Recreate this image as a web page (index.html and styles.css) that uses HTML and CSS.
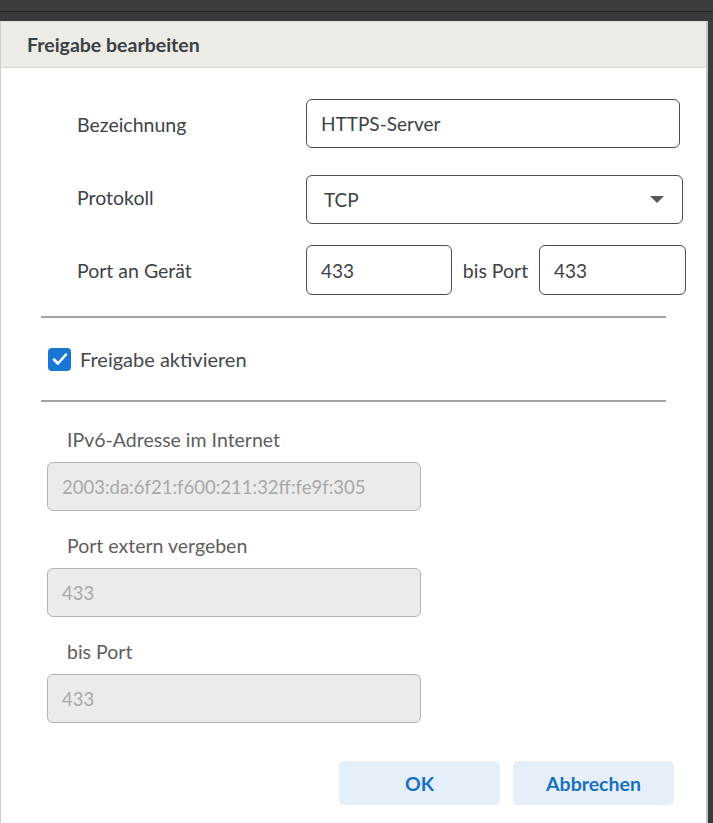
FILE: index.html
```html
<!DOCTYPE html>
<html lang="de">
<head>
<meta charset="utf-8">
<title>Freigabe bearbeiten</title>
<link rel="stylesheet" href="styles.css">
</head>
<body>
<div class="topbar"></div>
<div class="topbar2"></div>
<div class="dialog">
  <div class="dialog-header">Freigabe bearbeiten</div>
  <div class="dialog-body">
    <div class="form-top">
      <div class="row row-1">
        <span class="label">Bezeichnung</span>
        <div class="input w-name">HTTPS-Server</div>
      </div>
      <div class="row row-2">
        <span class="label">Protokoll</span>
        <div class="input select w-select"><span class="select-text">TCP</span><span class="caret"></span></div>
      </div>
      <div class="row row-3">
        <span class="label">Port an Gerät</span>
        <div class="input w-port">433</div>
        <span class="bis">bis Port</span>
        <div class="input w-port2">433</div>
      </div>
    </div>
    <div class="divider div-1"></div>
    <label class="check-row">
      <span class="checkbox">
        <svg width="16" height="14" viewBox="0 0 16 14"><path d="M2 7.5 L6 11.5 L14 2.5" fill="none" stroke="#fff" stroke-width="2.6" stroke-linecap="round" stroke-linejoin="round"/></svg>
      </span>
      <span class="check-label">Freigabe aktivieren</span>
    </label>
    <div class="divider div-2"></div>
    <div class="form-lower">
      <div class="field">
        <span class="sub-label">IPv6-Adresse im Internet</span>
        <div class="input disabled">2003:da:6f21:f600:211:32ff:fe9f:305</div>
      </div>
      <div class="field">
        <span class="sub-label">Port extern vergeben</span>
        <div class="input disabled">433</div>
      </div>
      <div class="field">
        <span class="sub-label">bis Port</span>
        <div class="input disabled">433</div>
      </div>
    </div>
    <div class="buttons">
      <button class="btn">OK</button>
      <button class="btn">Abbrechen</button>
    </div>
  </div>
</div>
</body>
</html>
```
FILE: styles.css
```css
html, body {
  margin: 0;
  padding: 0;
}
body {
  background: #3b3b3b;
  font-family: Lato, "Open Sans", sans-serif;
  width: 713px;
  height: 823px;
  overflow: hidden;
}
.topbar {
  height: 11px;
  background: #3d3d3d;
  border-bottom: 1px solid #242424;
}
.topbar2 {
  height: 9px;
  background: #3a3a3a;
}
.dialog {
  width: 708px;
  height: 802px;
  background: #fff;
  border-left: 1px solid #cfcfcf;
  border-right: 2px solid #c4c4c4;
  box-sizing: border-box;
}
.dialog-header {
  height: 47px;
  box-sizing: border-box;
  background: #ecebe5;
  border-top: 1px solid #e2e2e2;
  border-bottom: 1px solid #d6d6d6;
  padding-left: 26px;
  display: flex;
  align-items: center;
  font-size: 19.5px;
  font-weight: 700;
  color: #3b4045;
}
.dialog-body {
  padding-top: 31px;
}
.form-top {
  display: flex;
  flex-direction: column;
}
.row {
  display: flex;
  align-items: center;
}
.row-2 { margin-top: 27px; }
.row-3 { margin-top: 21px; }
.label {
  width: 229px;
  padding-left: 76px;
  font-size: 19.5px;
  color: #3d4247;
}
.row-1 .label { position: relative; top: 1px; }
.row-2 .label { position: relative; top: -2px; }
.input {
  box-sizing: border-box;
  height: 49px;
  border: 1px solid #4c4c4c;
  border-radius: 6px;
  display: flex;
  align-items: center;
  padding-left: 14px;
  font-size: 19px;
  color: #3d4247;
  background: #fff;
}
.w-name { width: 374px; }
.w-select { width: 377px; padding-left: 17px; padding-right: 18px; justify-content: space-between; }
.w-port { width: 146px; height: 50px; }
.w-port2 { width: 147px; height: 50px; }
.bis {
  width: 87px;
  text-align: center;
  font-size: 19.5px;
  color: #3d4247;
}
.caret {
  width: 0;
  height: 0;
  border-left: 7px solid transparent;
  border-right: 7px solid transparent;
  border-top: 7px solid #555a5f;
}
.divider {
  width: 625px;
  height: 2px;
  background: #a3a3a3;
  margin-left: 40px;
}
.div-1 { margin-top: 21px; }
.check-row {
  display: flex;
  align-items: center;
  height: 82px;
  padding-left: 47px;
}
.checkbox {
  width: 23px;
  height: 23px;
  border-radius: 4px;
  background: #1976d2;
  display: flex;
  align-items: center;
  justify-content: center;
}
.check-label {
  margin-left: 9px;
  font-size: 20px;
  color: #43484d;
}
.form-lower {
  padding-left: 46px;
  padding-top: 27px;
  display: flex;
  flex-direction: column;
  gap: 24px;
}
.field {
  display: flex;
  flex-direction: column;
  gap: 11px;
}
.sub-label {
  padding-left: 20px;
  font-size: 19.5px;
  line-height: 22px;
  color: #5e5e5e;
}
.input.disabled {
  width: 374px;
  background: #ebebeb;
  border-color: #b3b3b3;
  color: #a9a9a9;
  font-size: 18.5px;
}
.buttons {
  display: flex;
  gap: 13px;
  padding-left: 338px;
  margin-top: 38px;
}
.btn {
  width: 161px;
  height: 44px;
  border: none;
  border-radius: 5px;
  background: #e4eff9;
  color: #1a6fc4;
  font-family: inherit;
  font-size: 19.5px;
  font-weight: 700;
}
```
